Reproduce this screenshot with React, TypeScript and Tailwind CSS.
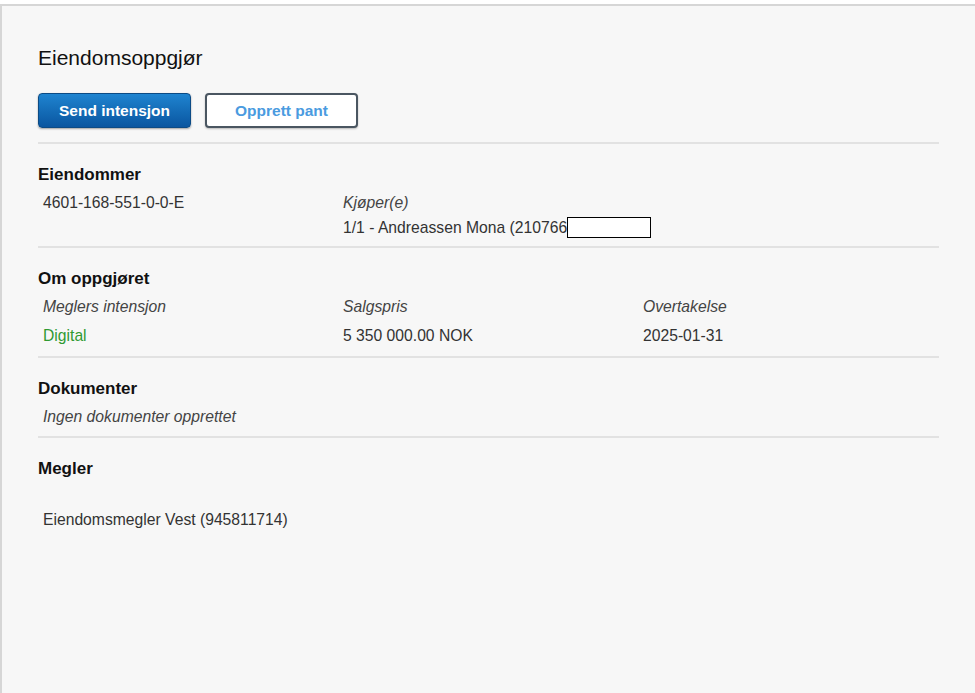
export default function App() {
  return (
    <div className="min-h-screen bg-white pt-[4px] font-['Liberation_Sans',Arial,sans-serif]">
      <div className="min-h-[689px] bg-[#f7f7f7] border-t-2 border-l-2 border-[#d6d6d6] pt-[40px]">
        <div className="ml-[36px] mr-[36px]">
          <h1 className="text-[21px] leading-[24px] text-[#111] mb-[23px]">Eiendomsoppgjør</h1>

          {/* Actions */}
          <div className="flex gap-[14px] mb-[14px]">
            <button className="w-[153px] h-[35px] rounded-[4px] border border-[#0c4b85] bg-gradient-to-b from-[#1f84d0] to-[#0a56a0] text-white font-bold text-[15.5px] shadow-[0_1px_2px_rgba(0,0,0,0.35)]">
              Send intensjon
            </button>
            <button className="w-[153px] h-[35px] rounded-[4px] border-2 border-[#4a5661] bg-white text-[#4a9be0] font-bold text-[15.5px] shadow-[0_1px_2px_rgba(0,0,0,0.25)]">
              Opprett pant
            </button>
          </div>

          {/* Eiendommer */}
          <section className="border-t-2 border-[#e2e2e2] pt-[21px] pb-[6px]">
            <h2 className="text-[17px] leading-[20px] font-bold text-[#111] mb-[5px]">Eiendommer</h2>
            <div className="grid grid-cols-[300px_300px_1fr] pl-[5px] text-[15.7px] leading-[25px] text-[#333]">
              <div>4601-168-551-0-0-E</div>
              <div>
                <div className="italic text-[#444]">Kjøper(e)</div>
                <div className="flex items-center whitespace-nowrap">
                  1/1 - Andreassen Mona (210766
                  <span className="inline-block shrink-0 w-[84px] h-[21px] bg-white border border-black"></span>
                </div>
              </div>
              <div></div>
            </div>
          </section>

          {/* Om oppgjøret */}
          <section className="border-t-2 border-[#e2e2e2] pt-[21px] pb-[8px]">
            <h2 className="text-[17px] leading-[20px] font-bold text-[#111] mb-[5px]">Om oppgjøret</h2>
            <div className="grid grid-cols-[300px_300px_1fr] pl-[5px] text-[15.7px] leading-[25px] text-[#333]">
              <div className="italic text-[#444]">Meglers intensjon</div>
              <div className="italic text-[#444]">Salgspris</div>
              <div className="italic text-[#444]">Overtakelse</div>
              <div className="mt-[4px] text-[#2f9a32]">Digital</div>
              <div className="mt-[4px]">5 350 000.00 NOK</div>
              <div className="mt-[4px]">2025-01-31</div>
            </div>
          </section>

          {/* Dokumenter */}
          <section className="border-t-2 border-[#e2e2e2] pt-[21px] pb-[7px]">
            <h2 className="text-[17px] leading-[20px] font-bold text-[#111] mb-[5px]">Dokumenter</h2>
            <div className="pl-[5px] text-[15.7px] leading-[25px] italic text-[#444]">Ingen dokumenter opprettet</div>
          </section>

          {/* Megler */}
          <section className="border-t-2 border-[#e2e2e2] pt-[21px]">
            <h2 className="text-[17px] leading-[20px] font-bold text-[#111] mb-[28px]">Megler</h2>
            <div className="pl-[5px] text-[15.7px] leading-[25px] text-[#333]">Eiendomsmegler Vest (945811714)</div>
          </section>
        </div>
      </div>
    </div>
  )
}
